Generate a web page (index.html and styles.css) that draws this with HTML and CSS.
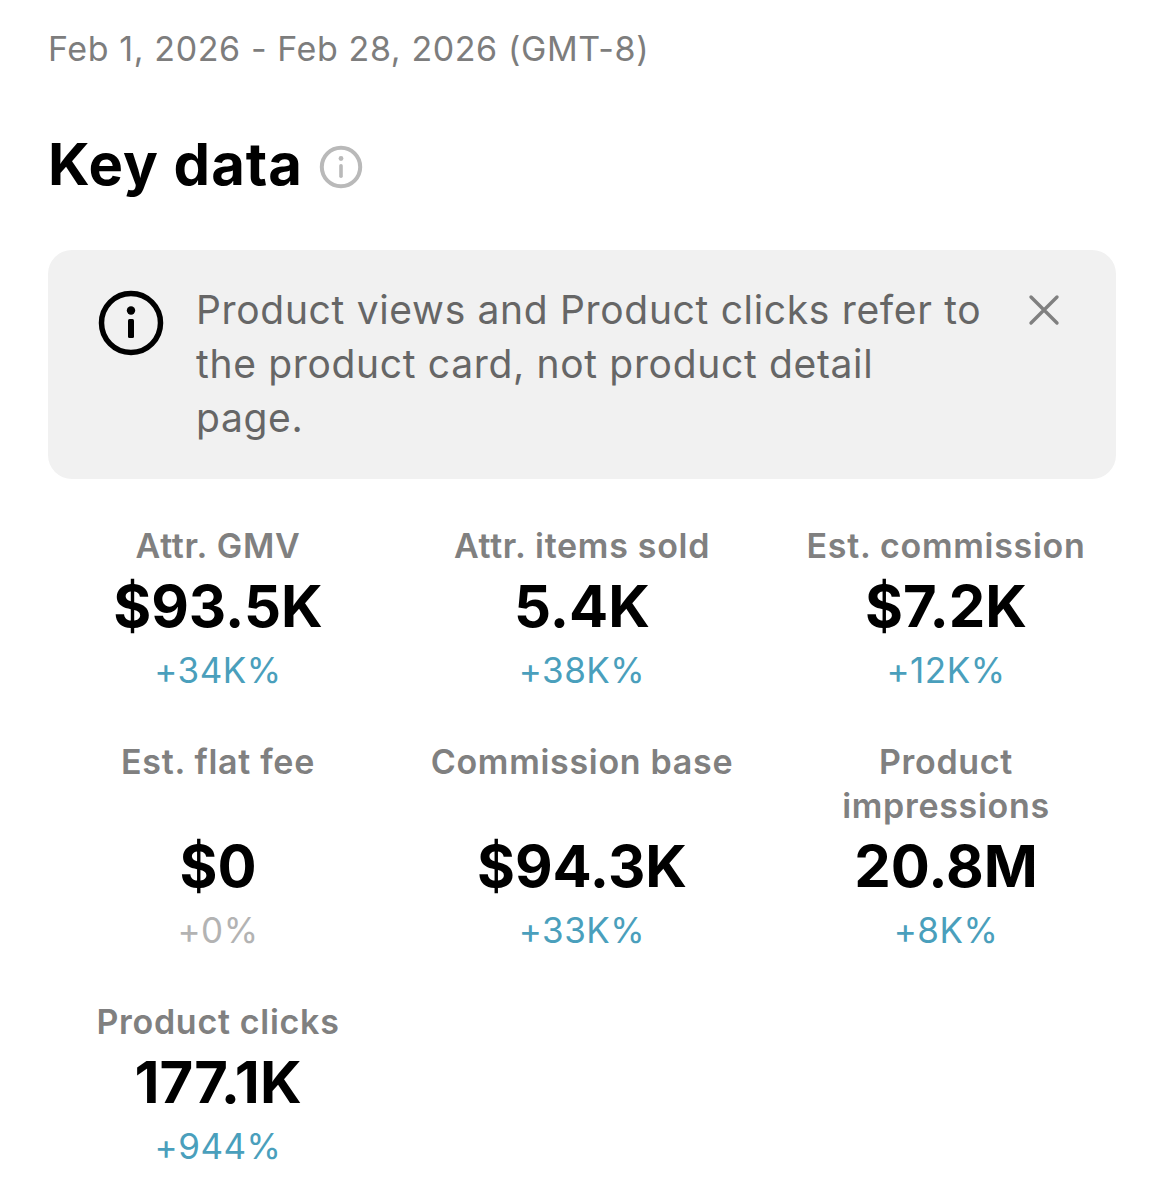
FILE: index.html
```html
<!DOCTYPE html>
<html lang="en">
<head>
    <meta charset="UTF-8">
    <title>Key data</title>
    <link rel="stylesheet" href="styles.css">
</head>
<body>
    <p class="date-range">Feb 1, 2026 - Feb 28, 2026 (GMT-8)</p>

    <div class="heading">
        <h1>Key data</h1>
        <svg class="heading-icon" viewBox="0 0 44 44" fill="none">
            <circle cx="22" cy="22" r="19.2" stroke="#b9b9b9" stroke-width="4"/>
            <circle cx="22" cy="13.5" r="2.4" fill="#b9b9b9"/>
            <rect x="20.2" y="19" width="3.6" height="14" rx="1.8" fill="#b9b9b9"/>
        </svg>
    </div>

    <div class="notice">
        <svg class="notice-icon" viewBox="0 0 66 66" fill="none">
            <circle cx="33" cy="33" r="29.5" stroke="#000" stroke-width="5.5"/>
            <circle cx="33" cy="20.5" r="4.2" fill="#000"/>
            <rect x="30" y="29" width="6" height="19" rx="1.5" fill="#000"/>
        </svg>
        <p class="notice-text">Product views and Product clicks refer to the product card, not product detail page.</p>
        <svg class="notice-close" viewBox="0 0 32 32" fill="none">
            <path d="M3 3L29 29M29 3L3 29" stroke="#808080" stroke-width="3.4" stroke-linecap="round"/>
        </svg>
    </div>

    <div class="metrics">
        <div class="metric">
            <div class="metric-label">Attr. GMV</div>
            <div class="metric-value">$93.5K</div>
            <div class="metric-change">+34K%</div>
        </div>
        <div class="metric">
            <div class="metric-label">Attr. items sold</div>
            <div class="metric-value">5.4K</div>
            <div class="metric-change">+38K%</div>
        </div>
        <div class="metric">
            <div class="metric-label">Est. commission</div>
            <div class="metric-value">$7.2K</div>
            <div class="metric-change">+12K%</div>
        </div>
        <div class="metric">
            <div class="metric-label">Est. flat fee</div>
            <div class="metric-value">$0</div>
            <div class="metric-change flat">+0%</div>
        </div>
        <div class="metric">
            <div class="metric-label">Commission base</div>
            <div class="metric-value">$94.3K</div>
            <div class="metric-change">+33K%</div>
        </div>
        <div class="metric">
            <div class="metric-label">Product impressions</div>
            <div class="metric-value">20.8M</div>
            <div class="metric-change">+8K%</div>
        </div>
        <div class="metric">
            <div class="metric-label">Product clicks</div>
            <div class="metric-value">177.1K</div>
            <div class="metric-change">+944%</div>
        </div>
    </div>
</body>
</html>
```

FILE: styles.css
```css
body {
    font-family: 'Inter', sans-serif;
    background: #fff;
    color: #000;
    margin: 0;
    padding: 24px 48px 0;
}

.date-range {
    margin: 0;
    font-size: 34px;
    line-height: 50px;
    letter-spacing: 0.6px;
    color: #7d7d7d;
}

.heading {
    display: flex;
    align-items: center;
    gap: 16px;
    margin-top: 55px;
    height: 70px;
}

h1 {
    margin: 0;
    font-size: 58px;
    line-height: 70px;
    letter-spacing: 1px;
    font-weight: 700;
}

.heading-icon {
    width: 44px;
    height: 44px;
    margin-top: 6px;
}

.notice {
    display: flex;
    align-items: flex-start;
    margin-top: 51px;
    padding: 33px 56px 34px 50px;
    background: #f1f1f1;
    border-radius: 24px;
}

.notice-icon {
    flex: none;
    width: 66px;
    height: 66px;
    margin-top: 7px;
}

.notice-text {
    flex: 1;
    margin: 0 0 0 32px;
    font-size: 39px;
    line-height: 54px;
    letter-spacing: 0.67px;
    color: #666;
}

.notice-close {
    flex: none;
    width: 32px;
    height: 32px;
    margin: 11px 0 0 40px;
}

.metrics {
    display: grid;
    grid-template-columns: repeat(3, 340px);
    column-gap: 24px;
    row-gap: 48px;
    margin-top: 45px;
    text-align: center;
}

.metric {
    display: flex;
    flex-direction: column;
}

.metric-label {
    flex: 1;
    font-size: 34px;
    line-height: 44px;
    letter-spacing: 0.7px;
    font-weight: 600;
    color: #808080;
}

.metric-value {
    margin-top: 6px;
    font-size: 58px;
    line-height: 64px;
    font-weight: 700;
}

.metric-change {
    margin-top: 10px;
    font-size: 35px;
    line-height: 44px;
    letter-spacing: 0.5px;
    color: #4a9fbc;
}

.metric-change.flat {
    color: #b3b3b3;
}
```
